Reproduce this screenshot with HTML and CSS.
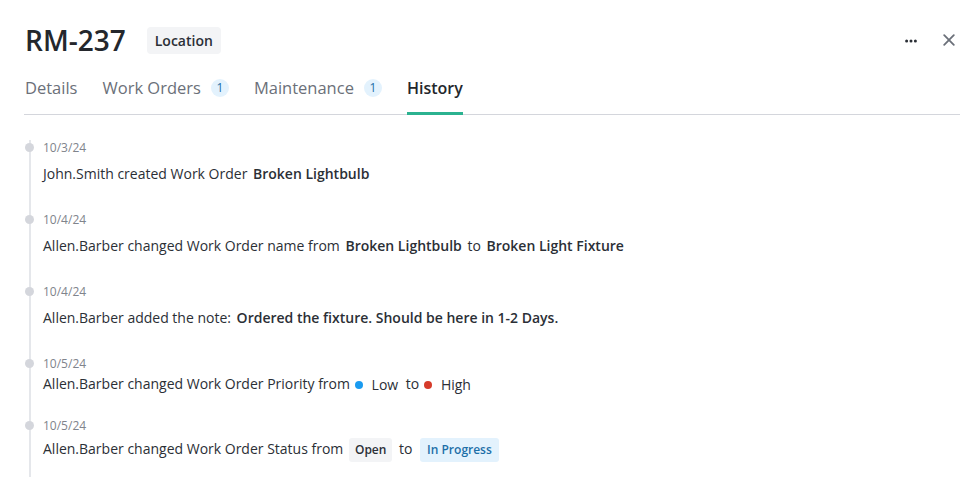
FILE: index.html
```html
<!DOCTYPE html>
<html>
<head>
<meta charset="utf-8">
<link rel="stylesheet" href="styles.css">
</head>
<body>
<div class="panel">
  <div class="header">
    <div class="title-wrap">
      <h1 class="title">RM-237</h1>
      <span class="type-badge">Location</span>
    </div>
    <div class="actions">
      <svg class="icon-more" width="12" height="4" viewBox="0 0 12 4"><circle cx="1.6" cy="2" r="1.5" fill="#2b2f36"/><circle cx="6" cy="2" r="1.5" fill="#2b2f36"/><circle cx="10.4" cy="2" r="1.5" fill="#2b2f36"/></svg>
      <svg class="icon-close" width="12" height="12" viewBox="0 0 12 12"><path d="M1.2 1.2L10.8 10.8M10.8 1.2L1.2 10.8" stroke="#6b7079" stroke-width="1.8" stroke-linecap="round"/></svg>
    </div>
  </div>
  <div class="tabs">
    <div class="tab">Details</div>
    <div class="tab">Work Orders <span class="count">1</span></div>
    <div class="tab">Maintenance <span class="count">1</span></div>
    <div class="tab active">History</div>
  </div>
  <div class="timeline">
    <div class="entry">
      <div class="date">10/3/24</div>
      <div class="text">John.Smith created Work Order <b>Broken Lightbulb</b></div>
    </div>
    <div class="entry">
      <div class="date">10/4/24</div>
      <div class="text">Allen.Barber changed Work Order name from <b>Broken Lightbulb</b> to <b>Broken Light Fixture</b></div>
    </div>
    <div class="entry">
      <div class="date">10/4/24</div>
      <div class="text">Allen.Barber added the note: <b>Ordered the fixture. Should be here in 1-2 Days.</b></div>
    </div>
    <div class="entry compact">
      <div class="date">10/5/24</div>
      <div class="text">Allen.Barber changed Work Order Priority from <span class="prio"><span class="dot low"></span>Low</span> to <span class="prio"><span class="dot high"></span>High</span></div>
    </div>
    <div class="entry compact last">
      <div class="date">10/5/24</div>
      <div class="text">Allen.Barber changed Work Order Status from <span class="status open">Open</span> to <span class="status progress">In Progress</span></div>
    </div>
  </div>
</div>
</body>
</html>
```

FILE: styles.css
```css
* { box-sizing: border-box; }
html, body { margin: 0; padding: 0; background: #fff; }
body {
  font-family: "Open Sans", "Noto Sans", sans-serif;
  color: #2b2f36;
  width: 976px;
  height: 477px;
  overflow: hidden;
}
.panel {
  padding: 22px 16px 0 24px;
}
.header {
  display: flex;
  justify-content: space-between;
  align-items: center;
  height: 36px;
}
.title-wrap {
  display: flex;
  align-items: center;
  gap: 21px;
}
.title {
  margin: 0;
  font-size: 28px;
  font-weight: 600;
  line-height: 36px;
  color: #24272c;
  padding-left: 1px;
}
.type-badge {
  background: #f3f4f6;
  border-radius: 4px;
  font-size: 14px;
  font-weight: 600;
  padding: 0 8px;
  line-height: 27px;
  height: 27px;
  color: #2b2f36;
}
.actions {
  display: flex;
  align-items: center;
  gap: 26px;
  padding-right: 5px;
}
.icon-more { display: block; margin-top: 1px; }
.icon-close { display: block; }
.tabs {
  display: flex;
  gap: 25px;
  margin-top: 17px;
  border-bottom: 1px solid #d4d6dc;
  padding-left: 1px;
}
.tab {
  font-size: 16.5px;
  color: #6b7079;
  line-height: 22px;
  padding: 2px 0 13px;
  display: flex;
  align-items: center;
  gap: 10px;
  border-bottom: 3px solid transparent;
  margin-bottom: -1px;
}
.tab.active {
  color: #24272c;
  font-weight: 600;
  font-size: 16px;
  border-bottom-color: #2bb290;
}
.count {
  display: inline-flex;
  align-items: center;
  justify-content: center;
  width: 18px;
  height: 18px;
  border-radius: 50%;
  background: #e3f2fd;
  color: #1d6fa8;
  font-size: 12px;
  line-height: 18px;
}
.timeline {
  margin-left: 5px;
  margin-top: 25px;
  border-left: 2px solid #e5e7eb;
  padding-left: 12px;
  padding-bottom: 16px;
}
.entry {
  position: relative;
  margin-bottom: 28px;
}
.entry::before {
  content: "";
  position: absolute;
  left: -18.5px;
  top: 3px;
  width: 9px;
  height: 9px;
  border-radius: 50%;
  background: #d4d6dc;
}
.date {
  font-size: 12px;
  line-height: 16px;
  color: #80848c;
}
.text {
  font-size: 14px;
  line-height: 20px;
  margin-top: 8px;
  color: #2b2f36;
}
.text b { font-weight: 600; margin: 0 2px; }
.entry.compact { margin-bottom: 23px; }
.entry.compact .text { margin-top: 2px; }
.entry.last { margin-bottom: 0; }
.entry.last .text { margin-top: 4px; }
.prio { display: inline-flex; align-items: center; margin: 0 4px 0 1px; }
.dot {
  display: inline-block;
  width: 8px;
  height: 8px;
  border-radius: 50%;
  margin-right: 9px;
}
.dot.low { background: #1a9bf0; }
.dot.high { background: #d63b2a; }
.status {
  display: inline-block;
  font-size: 12px;
  font-weight: 600;
  padding: 0 6px;
  line-height: 24px;
  border-radius: 3px;
  margin: 0 3px 0 2px;
}
.status.open { background: #f3f4f6; color: #2b2f36; }
.status.progress { background: #e3f2fd; color: #1d6fa8; padding: 0 7px; margin-left: 4px; }
```
